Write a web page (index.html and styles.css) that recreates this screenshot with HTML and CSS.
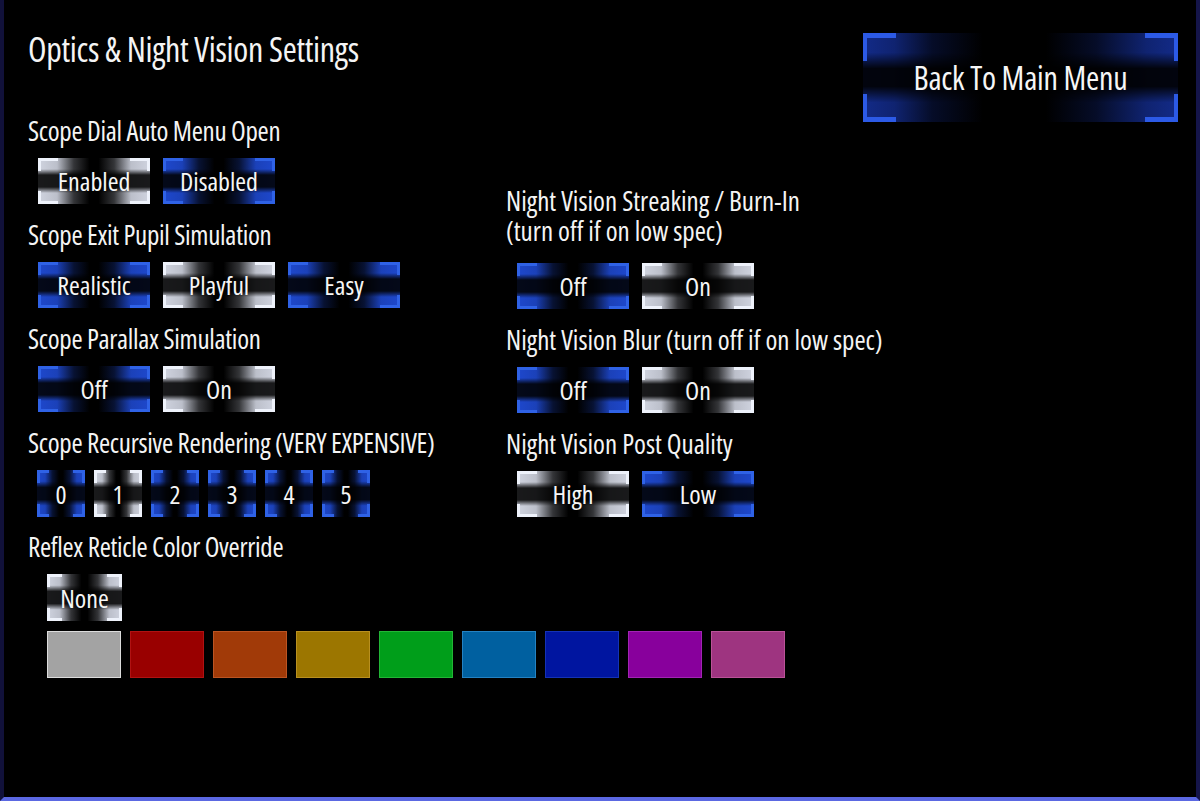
FILE: index.html
```html
<!DOCTYPE html>
<html lang="en">
<head>
<meta charset="utf-8">
<title>Optics &amp; Night Vision Settings</title>
<link rel="stylesheet" href="styles.css">
</head>
<body>
<div class="screen">
  <div class="col col-left">
    <h1 class="title">Optics &amp; Night Vision Settings</h1>

    <section class="group group-first">
      <div class="label">Scope Dial Auto Menu Open</div>
      <div class="opts">
        <div class="opt on">Enabled</div>
        <div class="opt">Disabled</div>
      </div>
    </section>

    <section class="group">
      <div class="label">Scope Exit Pupil Simulation</div>
      <div class="opts">
        <div class="opt">Realistic</div>
        <div class="opt on">Playful</div>
        <div class="opt">Easy</div>
      </div>
    </section>

    <section class="group">
      <div class="label">Scope Parallax Simulation</div>
      <div class="opts">
        <div class="opt">Off</div>
        <div class="opt on">On</div>
      </div>
    </section>

    <section class="group">
      <div class="label">Scope Recursive Rendering (VERY EXPENSIVE)</div>
      <div class="opts opts-num">
        <div class="opt num">0</div>
        <div class="opt num on">1</div>
        <div class="opt num">2</div>
        <div class="opt num">3</div>
        <div class="opt num">4</div>
        <div class="opt num">5</div>
      </div>
    </section>

    <section class="group group-last">
      <div class="label">Reflex Reticle Color Override</div>
      <div class="opts opts-color">
        <div class="opt none on">None</div>
      </div>
      <div class="swatches">
        <div class="swatch sw-grey"></div>
        <div class="swatch sw-red"></div>
        <div class="swatch sw-orange"></div>
        <div class="swatch sw-yellow"></div>
        <div class="swatch sw-green"></div>
        <div class="swatch sw-blue"></div>
        <div class="swatch sw-navy"></div>
        <div class="swatch sw-purple"></div>
        <div class="swatch sw-pink"></div>
      </div>
    </section>
  </div>

  <div class="col col-right">
    <div class="back-row">
      <div class="back">Back To Main Menu</div>
    </div>

    <section class="group group-rfirst">
      <div class="label">Night Vision Streaking / Burn-In</div>
      <div class="label">(turn off if on low spec)</div>
      <div class="opts">
        <div class="opt">Off</div>
        <div class="opt on">On</div>
      </div>
    </section>

    <section class="group">
      <div class="label">Night Vision Blur (turn off if on low spec)</div>
      <div class="opts">
        <div class="opt">Off</div>
        <div class="opt on">On</div>
      </div>
    </section>

    <section class="group">
      <div class="label">Night Vision Post Quality</div>
      <div class="opts">
        <div class="opt on">High</div>
        <div class="opt">Low</div>
      </div>
    </section>
  </div>
</div>
</body>
</html>
```

FILE: styles.css
```css
html, body {
  margin: 0;
  padding: 0;
  background: #000;
}

body {
  font-family: "Open Sans", "DejaVu Sans Condensed", sans-serif;
  font-stretch: 75%;
  color: #f4f4f4;
}

.screen {
  width: 1200px;
  height: 801px;
  box-sizing: border-box;
  display: flex;
  padding: 0 18px 0 24px;
  background: #000;
  border-left: 4px solid #11113a;
  border-right: 4px solid #15154a;
  border-bottom: 4px solid #5b68e2;
  overflow: hidden;
}

.col-left {
  width: 478px;
  flex: none;
}

.col-right {
  flex: 1;
}

.title {
  margin: 29px 0 0;
  font-size: 34px;
  line-height: 40px;
  font-weight: normal;
  letter-spacing: -0.3px;
  white-space: nowrap;
}

.label {
  font-size: 27px;
  line-height: 30px;
  letter-spacing: -0.3px;
  white-space: nowrap;
}

.col-right .label {
  letter-spacing: 0;
}

.group {
  margin-top: 16px;
}

.group-first {
  margin-top: 47px;
}

.group-last {
  margin-top: 15px;
}

.opts {
  display: flex;
  gap: 13px;
  margin-top: 12px;
  padding-left: 10px;
}

.col-right .opts {
  padding-left: 11px;
}

.group-rfirst {
  margin-top: 64px;
}

.group-rfirst .opts {
  margin-top: 17px;
}

.opts-num {
  gap: 9px;
  padding-left: 9px;
}

.opts-color {
  padding-left: 19px;
}

/* option button */
.opt {
  --b: #2f62e6;
  --f: 30, 72, 205;
  position: relative;
  isolation: isolate;
  box-sizing: border-box;
  flex: none;
  width: 112px;
  height: 46px;
  display: flex;
  align-items: center;
  justify-content: center;
  font-size: 26px;
  color: #f6f6f6;
  background: #000;
}

.opt.on {
  --b: #eef2fb;
  --f: 208, 212, 224;
}

.opt::before {
  content: "";
  position: absolute;
  inset: 0;
  z-index: -1;
  background: linear-gradient(90deg,
    rgba(var(--f), 1) 0,
    rgba(var(--f), .9) 17%,
    rgba(var(--f), .25) 32%,
    rgba(var(--f), 0) 46%,
    rgba(var(--f), 0) 54%,
    rgba(var(--f), .25) 68%,
    rgba(var(--f), .9) 83%,
    rgba(var(--f), 1) 100%);
  -webkit-mask-image: linear-gradient(180deg, #000 0, #000 24%, rgba(0,0,0,.12) 37%, rgba(0,0,0,.12) 63%, #000 76%, #000 100%);
  mask-image: linear-gradient(180deg, #000 0, #000 24%, rgba(0,0,0,.12) 37%, rgba(0,0,0,.12) 63%, #000 76%, #000 100%);
}

.opt::after {
  content: "";
  position: absolute;
  inset: 0;
  z-index: -1;
  background:
    linear-gradient(var(--b), var(--b)) left top / 20px 3px no-repeat,
    linear-gradient(var(--b), var(--b)) left top / 3px 13px no-repeat,
    linear-gradient(var(--b), var(--b)) right top / 20px 3px no-repeat,
    linear-gradient(var(--b), var(--b)) right top / 3px 13px no-repeat,
    linear-gradient(var(--b), var(--b)) left bottom / 20px 3px no-repeat,
    linear-gradient(var(--b), var(--b)) left bottom / 3px 13px no-repeat,
    linear-gradient(var(--b), var(--b)) right bottom / 20px 3px no-repeat,
    linear-gradient(var(--b), var(--b)) right bottom / 3px 13px no-repeat;
}

.opt.num {
  width: 48px;
  height: 47px;
}

.opt.num::after {
  background:
    linear-gradient(var(--b), var(--b)) left top / 12px 3px no-repeat,
    linear-gradient(var(--b), var(--b)) left top / 3px 13px no-repeat,
    linear-gradient(var(--b), var(--b)) right top / 12px 3px no-repeat,
    linear-gradient(var(--b), var(--b)) right top / 3px 13px no-repeat,
    linear-gradient(var(--b), var(--b)) left bottom / 12px 3px no-repeat,
    linear-gradient(var(--b), var(--b)) left bottom / 3px 13px no-repeat,
    linear-gradient(var(--b), var(--b)) right bottom / 12px 3px no-repeat,
    linear-gradient(var(--b), var(--b)) right bottom / 3px 13px no-repeat;
}

.opt.none {
  width: 75px;
  height: 47px;
}

.opt.none::after {
  background:
    linear-gradient(var(--b), var(--b)) left top / 15px 3px no-repeat,
    linear-gradient(var(--b), var(--b)) left top / 3px 13px no-repeat,
    linear-gradient(var(--b), var(--b)) right top / 15px 3px no-repeat,
    linear-gradient(var(--b), var(--b)) right top / 3px 13px no-repeat,
    linear-gradient(var(--b), var(--b)) left bottom / 15px 3px no-repeat,
    linear-gradient(var(--b), var(--b)) left bottom / 3px 13px no-repeat,
    linear-gradient(var(--b), var(--b)) right bottom / 15px 3px no-repeat,
    linear-gradient(var(--b), var(--b)) right bottom / 3px 13px no-repeat;
}

/* colour swatches */
.swatches {
  display: flex;
  width: max-content;
  gap: 9px;
  margin-top: 10px;
  padding-left: 19px;
}

.swatch {
  box-sizing: border-box;
  flex: none;
  width: 74px;
  height: 47px;
  border: 1px solid;
}

.sw-grey   { background: #a3a3a3; border-color: #dcdcdc; }
.sw-red    { background: #990000; border-color: #b01212; }
.sw-orange { background: #a13a08; border-color: #bb5422; }
.sw-yellow { background: #9c7600; border-color: #b99020; }
.sw-green  { background: #009e1a; border-color: #22b636; }
.sw-blue   { background: #0060a0; border-color: #2482c2; }
.sw-navy   { background: #0015a0; border-color: #1432b6; }
.sw-purple { background: #88009c; border-color: #a224b4; }
.sw-pink   { background: #9e3480; border-color: #ba5298; }

/* back button */
.back-row {
  display: flex;
  justify-content: flex-end;
  margin-top: 33px;
}

.back {
  --b: #2c5ae6;
  --f: 22, 50, 160;
  position: relative;
  isolation: isolate;
  width: 315px;
  height: 89px;
  display: flex;
  align-items: center;
  justify-content: center;
  font-size: 32px;
  letter-spacing: -0.2px;
  color: #f6f6f6;
}

.back::before {
  content: "";
  position: absolute;
  inset: 0;
  z-index: -1;
  background: linear-gradient(90deg,
    rgba(var(--f), .85) 0,
    rgba(var(--f), .7) 10%,
    rgba(var(--f), .25) 22%,
    rgba(var(--f), 0) 38%,
    rgba(var(--f), 0) 58%,
    rgba(var(--f), .25) 74%,
    rgba(var(--f), .7) 90%,
    rgba(var(--f), .85) 100%);
  -webkit-mask-image: linear-gradient(180deg, #000 0, #000 22%, rgba(0,0,0,.1) 40%, rgba(0,0,0,.1) 60%, #000 78%, #000 100%);
  mask-image: linear-gradient(180deg, #000 0, #000 22%, rgba(0,0,0,.1) 40%, rgba(0,0,0,.1) 60%, #000 78%, #000 100%);
}

.back::after {
  content: "";
  position: absolute;
  inset: 0;
  z-index: -1;
  background:
    linear-gradient(var(--b), var(--b)) left top / 33px 5px no-repeat,
    linear-gradient(var(--b), var(--b)) left top / 4px 28px no-repeat,
    linear-gradient(var(--b), var(--b)) right top / 33px 5px no-repeat,
    linear-gradient(var(--b), var(--b)) right top / 4px 28px no-repeat,
    linear-gradient(var(--b), var(--b)) left bottom / 33px 5px no-repeat,
    linear-gradient(var(--b), var(--b)) left bottom / 4px 28px no-repeat,
    linear-gradient(var(--b), var(--b)) right bottom / 33px 5px no-repeat,
    linear-gradient(var(--b), var(--b)) right bottom / 4px 28px no-repeat;
}
```
